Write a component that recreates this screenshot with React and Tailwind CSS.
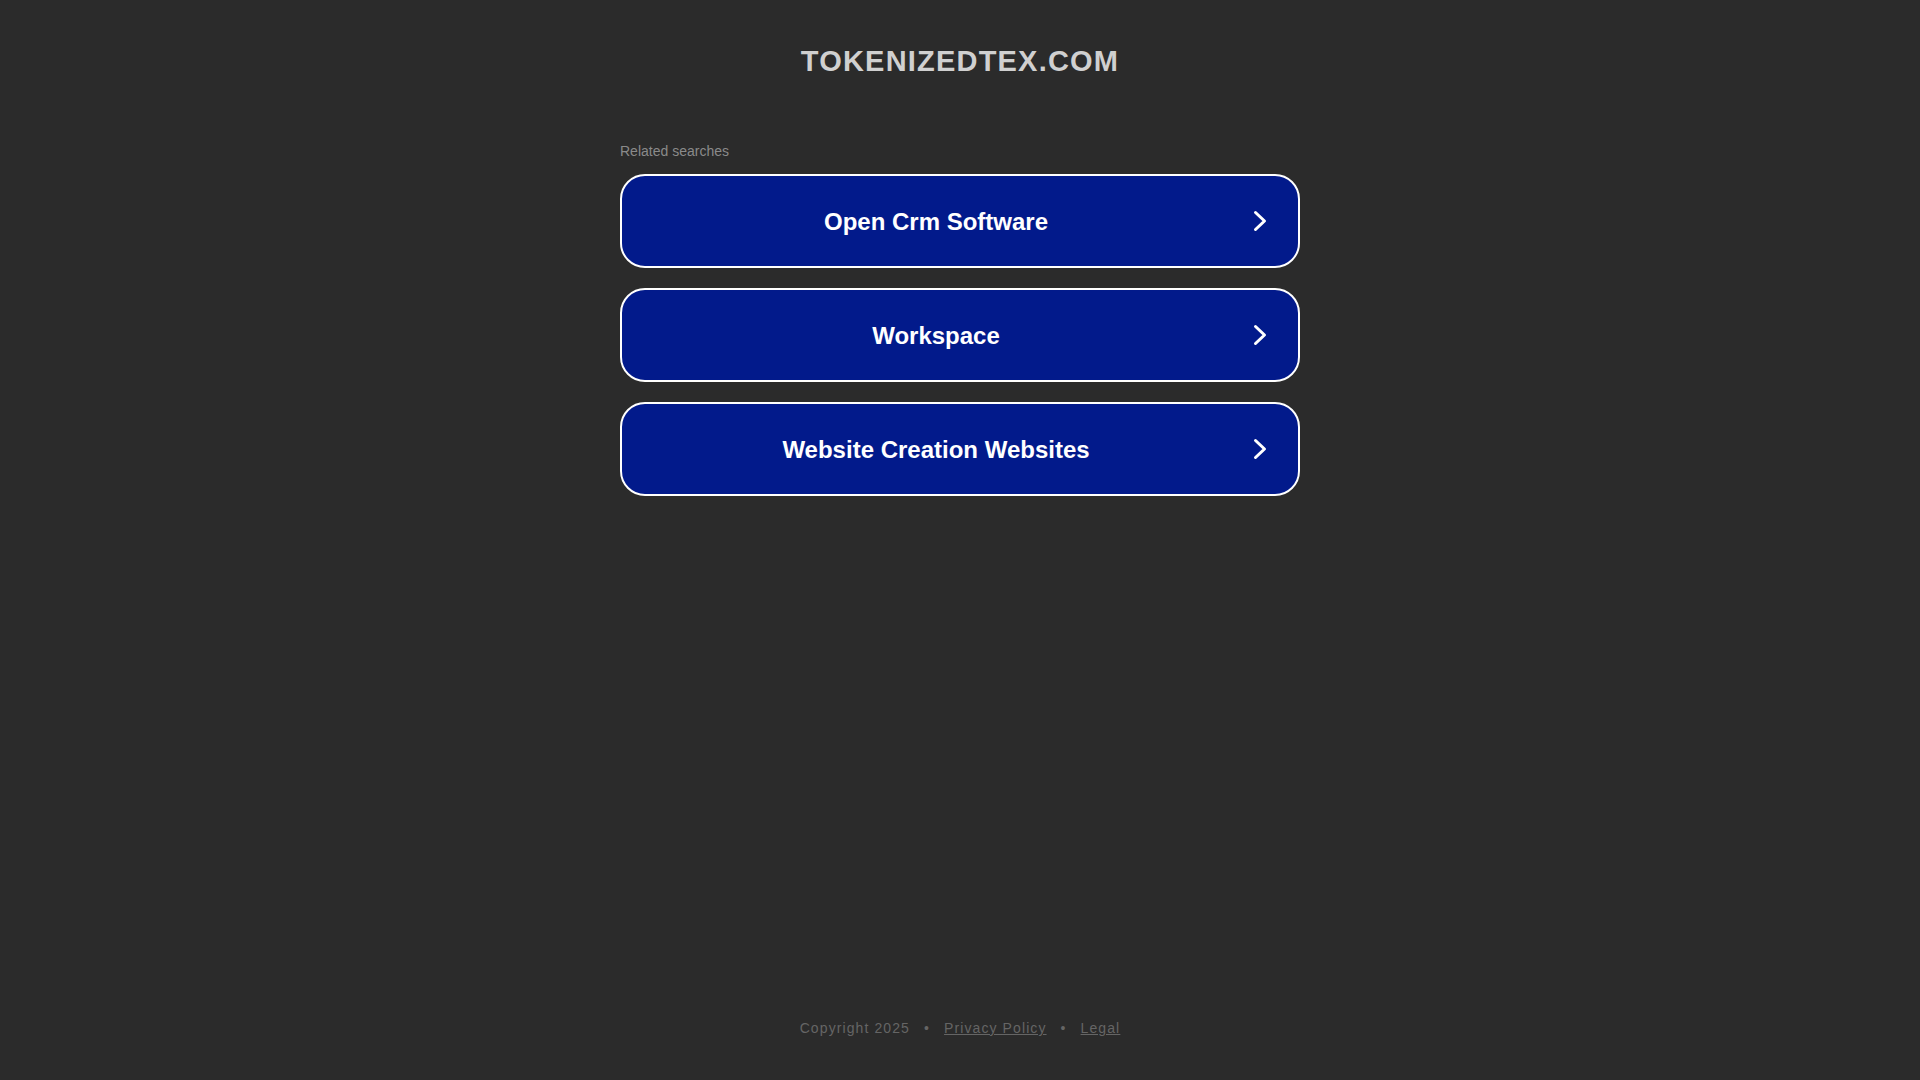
const searches = ['Open Crm Software', 'Workspace', 'Website Creation Websites'];

const Chevron = () => (
  <svg width="20" height="22" viewBox="0 0 20 22" fill="none" className="shrink-0 mr-[28px]">
    <path d="M5.5 2.5 L14.5 11 L5.5 19.5" stroke="white" strokeWidth="3" strokeLinecap="round" strokeLinejoin="round" />
  </svg>
);

const SearchLink = ({ label }) => (
  <a
    href="#"
    className="
      flex
      items-center
      h-[94px]
      w-full
      rounded-[25px]
      border-2
      border-white
      bg-[#021a8b]
      text-white
      no-underline
    "
  >
    <span className="flex-1 pt-[2px] text-center text-[24px] font-bold leading-[28px]">{label}</span>
    <Chevron />
  </a>
);

export default function App() {
  return (
    <div
      className="min-h-screen flex flex-col bg-[#2b2b2b]"
      style={{ fontFamily: '"Liberation Sans", Arial, sans-serif' }}
    >
      <h1 className="pt-[45px] text-center text-[29px] leading-[33px] font-bold tracking-[1.2px] text-[#d0d0d0]">
        TOKENIZEDTEX.COM
      </h1>
      <div className="w-[680px] mx-auto mt-[65px]">
        <div className="text-[14px] leading-[16px] text-[#8a8a8a]">Related searches</div>
        <div className="mt-[15px] flex flex-col gap-[20px]">
          {searches.map((s) => (
            <SearchLink key={s} label={s} />
          ))}
        </div>
      </div>
      <footer className="mt-auto pb-[44px] flex justify-center gap-[14px] text-[14px] leading-[16px] tracking-[1.1px] text-[#656565]">
        <span>Copyright 2025</span>
        <span>•</span>
        <a href="#" className="underline">Privacy Policy</a>
        <span>•</span>
        <a href="#" className="underline">Legal</a>
      </footer>
    </div>
  );
}
